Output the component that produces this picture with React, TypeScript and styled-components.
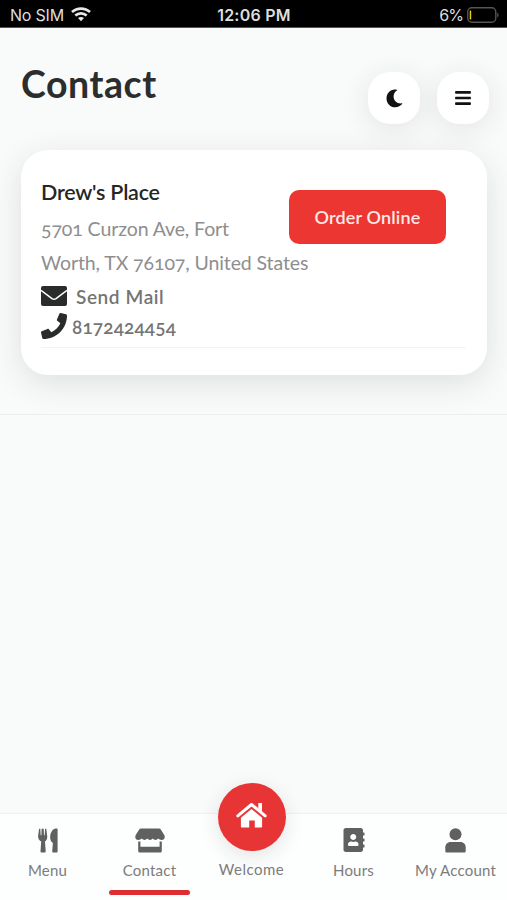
import React from 'react';
import styled, { createGlobalStyle } from 'styled-components';
import { FaBars, FaPhone, FaAddressBook } from 'react-icons/fa';

const GlobalStyle = createGlobalStyle`
  * { box-sizing: border-box; }
  body { margin: 0; background: #f9fafa; font-family: Lato, 'Open Sans', sans-serif; }
  h1, h2, p { margin: 0; }
  svg { display: block; flex: none; }
`;

const Screen = styled.div`
  width: 507px;
  height: 900px;
  display: flex;
  flex-direction: column;
  overflow: hidden;
  background: #f9fbfa;
`;

const StatusBar = styled.header`
  display: grid;
  grid-template-columns: 1fr auto 1fr;
  align-items: center;
  height: 28px;
  flex: none;
  padding: 2px 8px 0 10px;
  background: #000;
  color: #dedede;
  border-bottom: 1px solid #555;
  font: 400 16px/24px Inter, sans-serif;
`;

const StatusGroup = styled.div<{ $end?: boolean }>`
  display: flex;
  align-items: center;
  gap: ${p => (p.$end ? 4 : 7)}px;
  justify-content: ${p => (p.$end ? 'flex-end' : 'flex-start')};
  letter-spacing: ${p => (p.$end ? -0.9 : -0.2)}px;
`;

const Clock = styled.span`
  font-weight: 600;
  letter-spacing: 0.25px;
  padding-right: 1px;
`;

const Content = styled.main`
  flex: none;
  height: 387px;
  padding: 34px 20px 0 21px;
  border-bottom: 1px solid #eceeed;
`;

const TitleRow = styled.div`
  display: flex;
  justify-content: space-between;
  height: 87.5px;
`;

const Title = styled.h1`
  margin-top: -1px;
  color: #2c2d2d;
  font-size: 37.5px;
  line-height: 46px;
  font-weight: 700;
  letter-spacing: 0.55px;
`;

const Actions = styled.div`
  display: flex;
  gap: 17px;
  padding-top: 10px;
  margin-right: -2px;
`;

const RoundButton = styled.button`
  display: grid;
  place-items: center;
  width: 52px;
  height: 52px;
  padding: 0;
  border: 0;
  border-radius: 22px;
  background: #fff;
  color: #111214;
  box-shadow: 0 5px 28px rgba(30, 45, 40, 0.11);
`;

const Card = styled.section`
  height: 225px;
  padding: 29px 21px 0 20px;
  border-radius: 27px;
  background: #fff;
  box-shadow: 0 8px 32px rgba(30, 50, 45, 0.13);
`;

const CardBody = styled.div`
  display: grid;
  grid-template-columns: 1fr auto;
  height: 169px;
  border-bottom: 1px solid #f2f3f3;
`;

const Details = styled.div`
  width: 247px;
  white-space: nowrap;
`;

const Name = styled.h2`
  color: #252626;
  font-size: 21.5px;
  line-height: 26px;
  font-weight: 600;
  letter-spacing: -0.25px;
`;

const Address = styled.p`
  padding-top: 7px;
  color: #8e8e8e;
  font-size: 19.5px;
  line-height: 34px;
  font-weight: 400;
  letter-spacing: -0.1px;
  font-variant-numeric: oldstyle-nums;
`;

const ContactLink = styled.a<{ $gap: number; $spacing: number }>`
  display: flex;
  align-items: center;
  gap: ${p => p.$gap}px;
  height: 30px;
  color: #747474;
  font-size: 19px;
  font-weight: 600;
  letter-spacing: ${p => p.$spacing}px;
  font-variant-numeric: oldstyle-nums;
  svg { color: #2a2b2b; margin-top: 2px; }
  span { padding-top: 3px; }
`;

const OrderButton = styled.button`
  width: 157px;
  height: 54px;
  margin: 11px 20px 0 0;
  padding: 0;
  border: 0;
  border-radius: 10px;
  background: #eb3632;
  color: #fde9e7;
  font: 600 18px/54px Lato, sans-serif;
  letter-spacing: 0.15px;
`;

const TabBar = styled.nav`
  display: grid;
  grid-template-columns: repeat(5, 102px);
  height: 87px;
  margin-top: auto;
  padding-top: 11px;
  border-top: 1px solid #eff0f0;
  background: #fdfefe;
`;

const TabShell = styled.a`
  display: flex;
  flex-direction: column;
  align-items: center;
  margin-left: -7px;
  color: #606060;
`;

const TabIcon = styled.div`
  display: grid;
  place-items: center;
  height: 30px;
`;

const TabLabel = styled.span`
  padding-top: 5px;
  color: #7c7c7c;
  font-size: 15px;
  line-height: 20px;
  letter-spacing: 0.22px;
  white-space: nowrap;
`;

const ActiveLine = styled.div`
  width: 81px;
  height: 5px;
  margin-top: 10px;
  border-radius: 3px;
  background: #dd2e33;
`;

const HomeCircle = styled.div`
  display: grid;
  place-items: center;
  width: 68px;
  height: 68px;
  margin-top: -42px;
  padding-bottom: 4px;
  border-radius: 50%;
  background: #e73536;
  color: #fff;
  box-shadow: 0 5px 20px rgba(30, 40, 40, 0.12);
`;

const HomeLabel = styled(TabLabel)`
  padding-top: 8px;
  letter-spacing: 0.5px;
`;

const Wifi = () => (
  <svg width="20" height="15" viewBox="0 0 20 15" fill="none" stroke="#e8e8e8" strokeWidth="2.7">
    <path d="M1 5.1C6 .5 14 .5 19 5.1" />
    <path d="M4.3 8.6c3.3-3 8.1-3 11.4 0" />
    <path d="M7 11.1c1.8-1.5 4.2-1.5 6 0L10 14.3z" fill="#e8e8e8" stroke="none" />
  </svg>
);

const Battery = () => (
  <svg width="32" height="16" viewBox="0 0 32 16">
    <rect x=".75" y=".75" width="28" height="14.5" rx="4" fill="none" stroke="#555" strokeWidth="1.4" />
    <rect x="2.7" y="3.5" width="1.5" height="9" rx=".5" fill="#f1c900" />
    <path d="M30.2 5.5c1.8.7 1.8 4.3 0 5z" fill="#555" />
  </svg>
);

const Moon = () => (
  <svg width="17" height="19" viewBox="0 0 17 19" fill="currentColor">
    <path d="M10.7.7C4.8-.5.5 4.2.5 9.4c0 5 3.9 8.9 8.8 8.9 2.8 0 5.2-1.3 6.8-3.2.4-.5.1-.9-.5-.8-4.2.7-8-2.6-8-6.9 0-2.4 1.3-4.7 3.3-5.8.5-.3.4-.8-.2-.9Z" />
  </svg>
);

const Mail = () => (
  <svg width="26" height="20" viewBox="0 0 26 20">
    <rect width="26" height="20" rx="2" fill="currentColor" />
    <path d="M0 4.4l11 8.3q2 1.3 4 0l11-8.3" fill="none" stroke="#fff" strokeWidth="1.5" />
  </svg>
);

const Cutlery = () => (
  <svg width="20" height="25" viewBox="0 0 20 25" fill="currentColor">
    <path d="M1.1.8h1.2l.4 6.4h.7L3.6.8h2.1l.3 6.4h.7L7.1.8h1.2L9.2 8c.3 2.7-.7 4.6-2.2 5.4l.7 9.8c0 1-.5 1.4-1.4 1.4H3.9c-.9 0-1.4-.4-1.4-1.4l.7-9.8C1.4 12.5-.1 10.700.1 8Z" />
    <path d="M17.7.5h1.1c.5 0 .8.3.8.8v22c0 .8-.5 1.3-1.3 1.3h-2.800c-.9 0-1.4-.5-1.300-1.400l.7-8.1c-2.3-1.500-3-4.200-2.700-7.100.4-3.700 2.500-7 5.500-7.500Z" />
  </svg>
);

const Shop = () => (
  <svg width="30" height="25" viewBox="0 0 30 25" fill="currentColor">
    <path d="M6 .5h18c.8 0 1.400.3 1.800 1l3.300 5.300c1.500 2.500.2 5.200-2.500 5.200-1.400 0-2.600-.5-3.300-1.400-1.700 1.800-4.200 1.800-5.500 0-1.500 1.800-4.100 1.800-5.600 0-1.400 1.800-3.900 1.800-5.500 0C6 11.500 4.800 12 3.400 12 .7 12-.6 9.300.9 6.800l3.300-5.300c.4-.7 1-.9 1.800-1Z" />
    <path d="M3.200 13.5h2.200v5.200h19.200v-5.200h2.200v9.500c0 .9-.6 1.500-1.500 1.500H4.700c-.9 0-1.500-.6-1.500-1.500Z" />
  </svg>
);

const House = () => (
  <svg width="31" height="26" viewBox="0 0 31 26" fill="none" stroke="currentColor">
    <path d="M1.800 13.800 15.500 2.500l13.700 11.300" strokeWidth="3" strokeLinecap="round" strokeLinejoin="round" />
    <path d="M22.300 1h3.700v9.300l-3.700-3.200Z" fill="currentColor" stroke="none" />
    <path d="m15.500 7 10.600 8.800v8.600c0 .7-.4 1.100-1.100 1.100h-6.200v-7h-5.600v7H6c-.7 0-1.100-.4-1.100-1.100v-8.600Z" fill="currentColor" stroke="none" />
  </svg>
);

const Person = () => (
  <svg width="21" height="25" viewBox="0 0 21 25" fill="currentColor">
    <circle cx="10.500" cy="6.300" r="6" />
    <path d="M5.500 14h10c3 0 5.200 2.300 5.200 5.200v3.700c0 1-.7 1.700-1.700 1.700H2c-1 0-1.700-.7-1.700-1.700v-3.700C.3 16.300 2.500 14 5.500 14Z" />
  </svg>
);

const tabs = {
  left: [
    { label: 'Menu', icon: <Cutlery /> },
    { label: 'Contact', icon: <Shop />, active: true },
  ],
  right: [
    { label: 'Hours', icon: <FaAddressBook size={24} /> },
    { label: 'My Account', icon: <Person /> },
  ],
};

function Tab({ label, icon, active }: { label: string; icon: React.ReactNode; active?: boolean }) {
  return (
    <TabShell>
      <TabIcon>{icon}</TabIcon>
      <TabLabel>{label}</TabLabel>
      {active && <ActiveLine />}
    </TabShell>
  );
}

export default function App() {
  return (
    <Screen>
      <GlobalStyle />
      <StatusBar>
        <StatusGroup>No SIM <Wifi /></StatusGroup>
        <Clock>12:06 PM</Clock>
        <StatusGroup $end>6% <Battery /></StatusGroup>
      </StatusBar>
      <Content>
        <TitleRow>
          <Title>Contact</Title>
          <Actions>
            <RoundButton aria-label="Dark mode"><Moon /></RoundButton>
            <RoundButton aria-label="Open menu"><FaBars size={18} /></RoundButton>
          </Actions>
        </TitleRow>
        <Card>
          <CardBody>
            <Details>
              <Name>Drew's Place</Name>
              <Address>5701 Curzon Ave, Fort<br />Worth, TX 76107, United States</Address>
              <ContactLink $gap={9} $spacing={0.6}><Mail /><span>Send Mail</span></ContactLink>
              <ContactLink $gap={5} $spacing={0.15}><FaPhone size={26} /><span>8172424454</span></ContactLink>
            </Details>
            <OrderButton>Order Online</OrderButton>
          </CardBody>
        </Card>
      </Content>
      <TabBar>
        {tabs.left.map(t => <Tab key={t.label} {...t} />)}
        <TabShell>
          <HomeCircle><House /></HomeCircle>
          <HomeLabel>Welcome</HomeLabel>
        </TabShell>
        {tabs.right.map(t => <Tab key={t.label} {...t} />)}
      </TabBar>
    </Screen>
  );
}
